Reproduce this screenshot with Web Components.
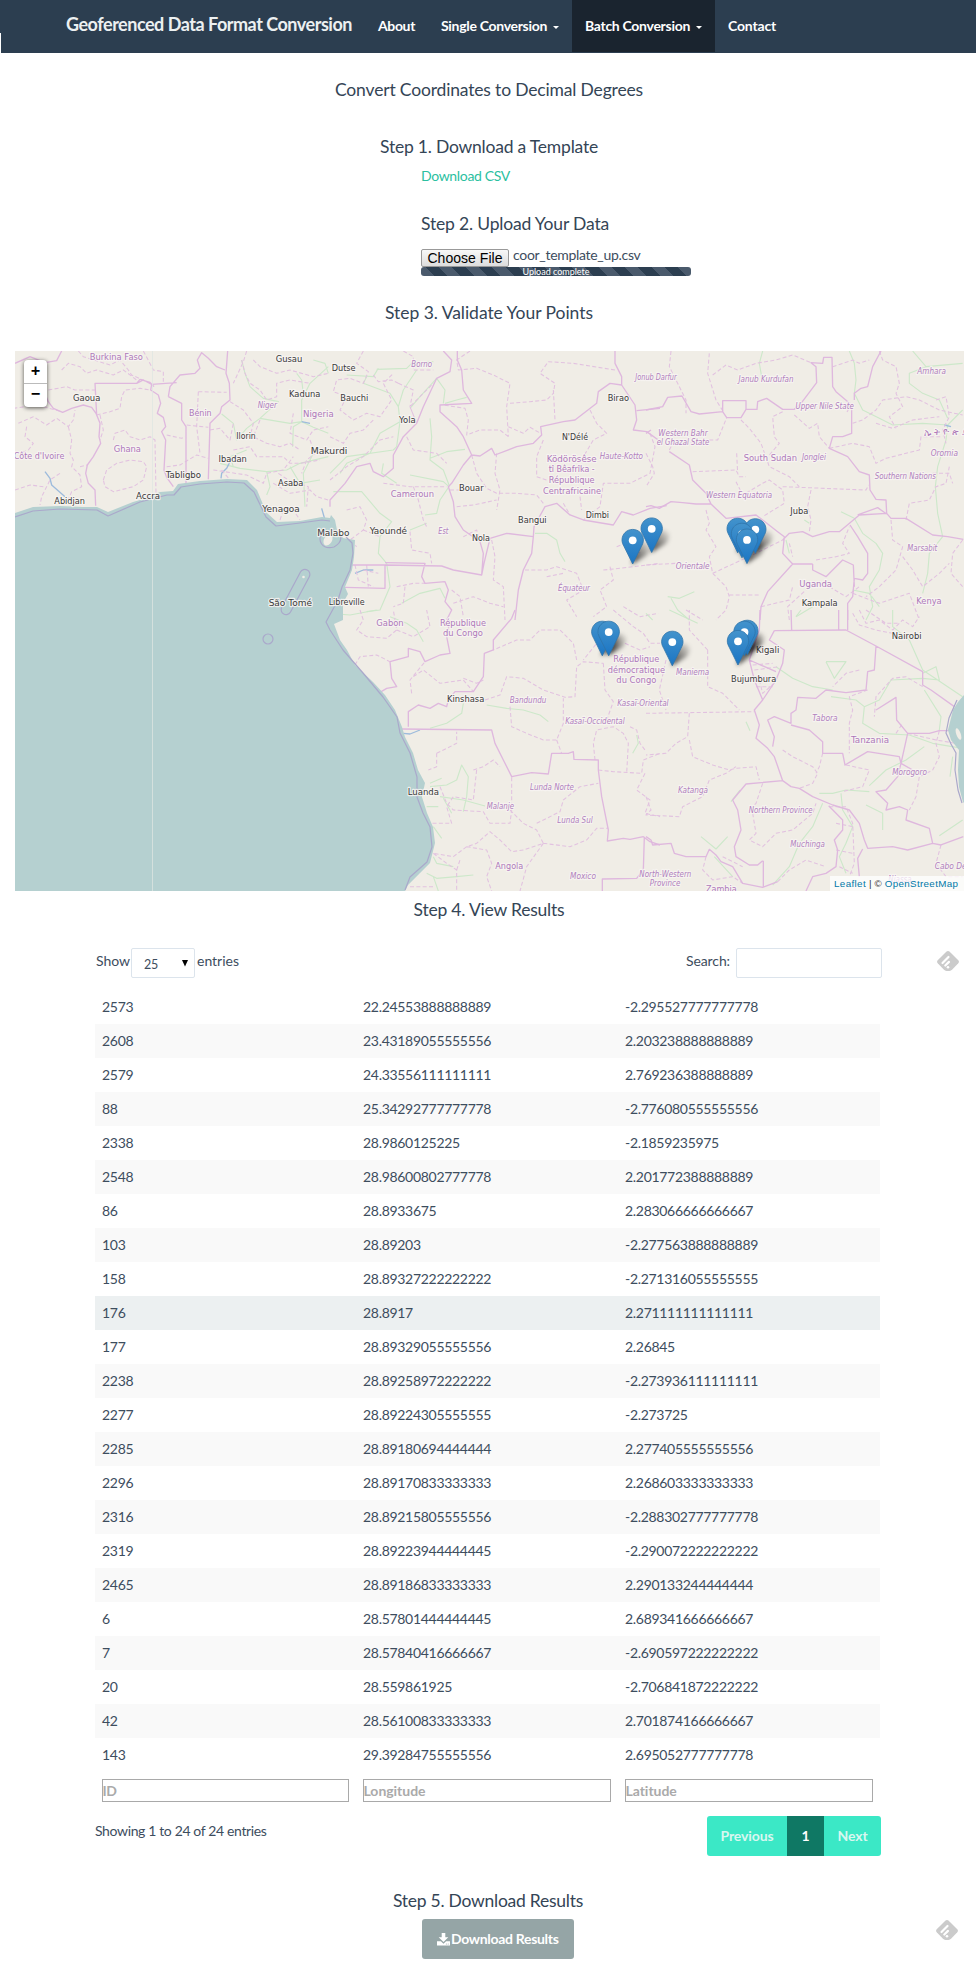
<!DOCTYPE html>
<html lang="en">
<head>
<meta charset="utf-8">
<title>Geoferenced Data Format Conversion</title>
<style>
html,body{margin:0;background:#fff}
body{font-family:Lato,"Liberation Sans",sans-serif;font-size:14px;line-height:20px;color:#3d4d5e;width:976px;height:1970px;overflow:hidden}
</style>
</head>
<body>
<conversion-page></conversion-page>
<script>
const make=(name,html,after)=>customElements.define(name,class extends HTMLElement{
  connectedCallback(){
    if(this.shadowRoot)return;
    const r=this.attachShadow({mode:'open'});
    const t=document.createElement('template');
    t.innerHTML=typeof html==='function'?html(this):html;
    r.append(document.importNode(t.content,true));
    if(after)after(this,r);
  }
});

/* Text tracked in or out to a fixed measure */
make('fit-text','<style>:host{display:inline-block;white-space:nowrap}</style><slot></slot>',el=>{
  const w=+el.getAttribute('w'),n=el.textContent.length;
  const ls=(w-el.getBoundingClientRect().width)/n;
  el.style.letterSpacing=ls.toFixed(3)+'px';
});

make('nav-item',el=>`<style>
:host{display:flex;box-sizing:border-box;height:52px;padding-left:13px;align-items:center;gap:6px;color:#fff;font-weight:700;font-size:14px}
:host([active]){background:#1a242f}
:host([caret])::after{content:"";border:3px solid transparent;border-top-color:#fff;border-bottom:0;margin-top:3px}
div{padding-bottom:1px}
</style><div><slot></slot></div>`);

make('site-nav',`<style>
:host{display:flex;height:53px;background:#2c3e50;padding-left:66px;position:relative}
:host::before{content:"";position:absolute;left:0;top:33px;width:1px;height:20px;background:#fff}
.brand{width:299px;font-size:18px;font-weight:700;color:#ecf0f1;line-height:49px}
</style>
<div class="brand"><fit-text w="286">Geoferenced Data Format Conversion</fit-text></div>
<nav-item style="width:63px"><fit-text w="37">About</fit-text></nav-item>
<nav-item caret style="width:144px"><fit-text w="106">Single Conversion</fit-text></nav-item>
<nav-item active caret style="width:143px"><fit-text w="105">Batch Conversion</fit-text></nav-item>
<nav-item style="width:80px"><fit-text w="48">Contact</fit-text></nav-item>`);

make('step-title','<style>:host{display:block;height:20px;line-height:22px;font-size:17.5px;text-align:center;color:#344556}</style><slot></slot>');

make('upload-box',`<style>
:host{display:block;margin-left:421px;width:270px}
.f{display:flex;height:18px;gap:4px}
button{box-sizing:border-box;width:88px;height:18px;padding:0;border:1px solid #999;border-radius:2px;background:linear-gradient(#f8f8f8,#ddd);font:14px/16px "Liberation Sans",sans-serif;color:#000}
.n{line-height:12px;padding-top:0}
.p{height:9px;border-radius:3px;text-align:center;color:#fff;font-size:9px;line-height:10px;background:#2c3e50 repeating-linear-gradient(45deg,#4a5a6c 0 9.4px,#2c3e50 9.4px 18.800px);overflow:hidden}
</style><div class="f"><button><fit-text w="75">Choose File</fit-text></button><div class="n"><fit-text w="127.5">coor_template_up.csv</fit-text></div></div>
<div class="p"><fit-text w="67">Upload complete</fit-text></div>`);

/* Map artwork: each sheet is drawn at three units per pixel */
const sheets=[
{x:0,y:340,
solid:'M45 70L90 50L135 68L170 62L185 33M130 150L145 185L160 205L188 217L215 205L250 195L275 202L288 220L300 250L297 290L302 310L280 350L262 375L257 400L265 430L285 450L287 497M290 225L285 130L410 130L430 120L455 133L530 128M455 133L452 150L475 165L482 190L472 220L490 232L497 260L485 275L497 300L492 390L500 412L520 440M505 170L510 140L540 105L585 100L600 85L592 60L605 38L625 55L650 80L675 90M505 170L545 190L545 240L558 260L558 430M625 418L630 250L660 220L665 200L690 180L688 130L678 100L683 33M410 130L420 118L450 127L462 140',
dash:'M185 90L205 70L240 80L260 100L290 90L340 105L370 90L410 120M290 225L330 215L360 205L365 170L375 150L420 145L450 150M235 33L250 50L330 75L360 60L385 90L395 105L440 125M430 33L455 80L460 90L490 95L490 125M145 150L200 140L225 150L285 150M55 250L100 230L140 255L170 235L205 260L220 240L225 210M205 260L215 300L210 340L220 360L215 380L240 405L245 440L215 455L200 490M80 260L75 290L100 310L85 330L60 340M310 420L320 390L350 370L390 360L430 365L440 380L430 420L400 440L340 455L315 440L310 420M340 300L345 280L375 270L390 290L420 300L450 290L465 300L468 460M180 400L150 420L125 470L120 495M45 450L90 435L130 440M500 285L545 295L555 290M560 255L625 262M500 380L540 375L590 345L625 355M595 155L680 157M595 155L590 260L600 340M725 60L735 100L750 130L780 150L800 180L830 170L830 130L870 120L930 130M630 270L660 265L690 300L700 250M690 185L730 210L760 250L750 290L720 290M780 240L760 290L800 310L840 320L870 310L900 330M700 330L750 320L770 350L850 350L870 370L900 370L960 360M640 390L740 405L790 430L800 400L850 390L880 350M880 220L870 280L920 300L940 270L985 260M760 60L780 80L830 100L870 90L940 110L985 100M740 33L730 65L700 130M820 430L870 460L930 450L950 470L985 480M840 540L850 510L880 510L900 540M930 300L945 340L920 360L905 400M835 400L865 420L925 440L920 500M665 390L690 420M300 225L310 270L300 300M240 380L262 375M40 205L75 200L100 190L130 200L185 215',
green:'M750 140L790 175L835 185L780 235L740 265L710 300L700 250L665 222M780 235L870 250L905 245L940 262L985 280M890 100L905 120L910 160M985 80L930 130L905 180L905 245L880 260L878 320M700 380L690 350L740 330M660 370L720 385L800 395L860 390L900 370L985 350M800 395L810 440L800 465M940 340L910 400L915 500M870 380L900 430L960 420M725 60L735 100L750 140M940 60L975 70L985 100',
blue:'M135 395L150 415L155 435L195 470M690 365L680 385L665 400L663 415M965 505L975 540M905 245L930 250',
labels:[['Burkina Faso',349,60,160,'s'],['Gaoua',260,183,82,'c'],['Bénin',601,228,68,'s'],['Niger',802,205,58,'p'],['Nigeria',955,231,92,'s'],['Gusau',867,67,80,'c'],['Kaduna',914,170,94,'c'],['Ilorin',738,296,58,'c'],['Ibadan',698,365,85,'c'],['Makurdi',987,343,110,'c'],['Ghana',382,336,82,'s'],["Côte d'Ivoire",117,356,152,'s'],['Tabligbo',550,414,106,'c'],['Abidjan',209,492,92,'c'],['Accra',444,477,72,'c'],['Asaba',872,438,76,'c'],['Yenagoa',843,516,112,'c'],['Malabo',1000,589,97,'c'],['São Tomé',871,798,130,'c'],['Libreville',1040,795,108,'c']]},
{x:330,y:340,
solid:'M0 500L0 480L45 430L80 380L120 370L130 395L160 410L190 385L190 345L220 290L260 250L280 200L320 115L360 95L365 60L340 33M382 33L382 60L395 90L400 150L425 190L330 195L330 215L380 260L400 290L425 345L400 375L365 430L355 440L370 485L375 530L400 570L450 605L460 640L455 705L370 690L335 678L165 675M60 675L165 675L165 745L45 742M165 668L285 670L275 710L285 730L345 725L355 750L345 785L365 810L350 840M425 345L450 348L485 325L495 345L560 320L610 310L635 285L632 260L700 245L735 240L800 190L805 155L840 130L875 135L915 195L920 240L910 270L950 275L985 300M920 212L990 205M855 33L855 70L875 110L875 135M455 705L462 670L480 595L530 580L610 590L612 560L645 500L680 490L720 525L760 540L850 555L875 515L910 525L960 505L1010 497M610 590L605 640L580 690L565 750L555 840',
dash:'M100 33L80 70L115 95L100 130L60 115L20 120L10 155L50 170L30 210L70 240L110 220L150 230L185 180L160 130L190 100M205 130L250 150L240 200L260 250M130 105L145 125L185 120L205 130M220 33L250 50L250 90L310 90M260 250L240 200L280 160L310 130M0 290L40 310L60 280L100 270L130 240M0 420L50 380L100 350L150 300L190 290M420 33L380 60L385 90L440 85L490 105L540 130L530 200L535 290M540 190L600 185L650 180L670 160L675 130L630 100L655 65L730 70L855 90M535 290L510 270L450 270L410 285L415 240L405 205L340 195M535 260L580 280L600 262L632 280M500 340L495 400L510 450L500 510M425 345L440 400L470 445L500 460L560 460L620 465L640 490M380 500L430 495L500 480M640 300L620 350L620 410L650 420M780 210L800 250L830 280L790 300L760 350M960 280L975 320L960 400L900 430L820 430L810 500L760 540M670 150L675 240M160 430L240 440L350 440M250 440L265 480L280 540L290 560M50 510L90 500L110 540L100 570L60 600L80 620M100 570L150 590M75 675L85 720L130 740M100 690L145 700M110 675L115 740M240 575L245 630L300 640L305 670M400 590L440 570L450 605M485 600L495 650L490 720L520 740L525 840M585 690L650 690L680 680L740 700L760 750L710 780L740 830M650 710L700 700M820 690L870 685L990 670M840 680L850 720L810 750L830 800L790 830M880 800L930 830L985 820M860 620L910 600L930 640M365 750L390 770L400 830M200 740L250 730L285 730M225 740L220 790L190 800M370 790L430 770L480 790L520 800M230 290L250 330L320 340L350 370M750 470L755 510M700 490L720 525M410 450L360 450',
green:'M10 455L95 455L150 520L185 545L150 590L145 640L170 670M240 405L340 425L357 440L330 480L320 520L285 525M300 235L305 290L300 360L340 390L357 435M300 355L350 335L405 328M140 88L230 85L245 70L310 65M50 105L130 110L145 85M110 110L100 130L180 160L205 200L210 245L150 280L120 340L50 370L30 400M210 245L200 320L190 330L50 350L0 400M240 205L270 170L320 115L345 150L340 190M345 190L380 180L410 172M615 580L650 580L680 600L690 640L705 665M170 670L180 740L150 810L110 815M215 790L270 760L330 745L345 775M260 90L220 150L205 200M240 570L290 550M160 370L155 400L200 430',
blue:'M75 700L100 690L130 690',
labels:[['Dutse',41,93,72,'c'],['Borno',275,82,62,'p'],['Bauchi',73,183,84,'c'],['Yola',232,249,50,'c'],['Birao',865,184,64,'c'],["N'Délé",735,301,78,'c'],['Ködörösêse',725,365,150,'s'],['tî Bêafrîka -',725,397,138,'s'],['République',725,430,138,'s'],['Centrafricaine',726,462,174,'s'],['Haute-Kotto',874,357,130,'p'],['Bouar',424,454,74,'c'],['Cameroun',247,470,130,'s'],['Bangui',607,549,86,'c'],['Dimbi',802,535,70,'c'],['Yaoundé',175,581,112,'c'],['Est',340,583,30,'p'],['Nola',453,603,54,'c'],['Équateur',732,754,96,'p']]},
{x:646,y:340,
solid:'M0 210L50 200L65 172L108 168L135 215L160 222L230 215L242 233L285 233L300 208L333 208L335 185L362 175L410 208L445 208L465 190L512 128L510 80L495 68L530 70L533 52L558 52L560 140L570 155L617 195L617 280L590 290L560 290L550 325L605 350L640 395L670 405L672 450L690 478L720 480L722 520L640 525L580 575L550 575L500 590L470 575L430 580L410 600M230 215L230 182L300 182L300 208M0 500L15 497L40 505L75 485L110 488L150 492L195 492L240 535L330 525L350 540L395 575L415 590L410 640L440 672L500 672M440 672L365 755L345 800L342 840M705 33L680 80L665 140L645 145L625 160L625 180M722 520L735 535L780 535L860 585L905 590L952 598M722 522L695 503L635 525M612 555L635 590L665 640L665 700L650 720L625 715L620 770L605 790L605 840M500 690L540 710L590 660L622 675L625 740M500 672L500 690L540 710M0 280L15 270M70 335L130 375L140 420L180 460L195 492',
dash:'M75 33L70 80L95 130L120 180L120 220M190 40L185 100L210 180L232 215M200 105L240 75L275 90L330 70L390 60L440 45L495 68M70 330L80 310L130 310L180 300L215 300L242 233M285 240L310 265L345 310L370 380L430 410L460 440M140 395L270 390L280 410L300 410M272 340L275 400M410 215L380 230L385 290L400 310L370 345M445 225L490 265L515 250L520 290L550 325M270 425L290 465L350 430L370 420L410 450L415 490L350 530M410 440L660 450L668 435M495 450L485 500L495 540L490 575M560 80L620 60L640 70L670 60M620 190L600 220M620 250L650 240L690 210L710 180L780 170L820 180L880 210L950 225M690 250L740 265L800 240L880 230M700 33L710 60L750 80L760 130L750 160L770 200L730 230L750 265M550 325L620 310L670 320L690 370L720 355L820 330L825 290L890 290M780 540L790 490L850 480L870 440L900 430L910 380M735 540L740 600L770 620L750 690L700 740L660 770M950 600L920 640L915 700L950 740M770 650L800 690L830 740L880 700L910 670M510 660L570 650L610 640L590 610L610 560M430 610L440 650M0 340L20 380L25 400L0 440M180 510L190 550L180 570L210 620L190 650L200 700L240 740L250 770L240 810L210 840M0 675L90 670M200 700L330 640L410 600M250 765L340 765M120 810L170 840M345 800L430 780L440 740M550 740L600 770L640 740M620 760L700 790L790 760L820 840M430 840L425 800L480 750M870 180L900 170L910 230L890 270L900 310M860 400L910 400L920 430',
green:'M350 33L340 70L347 110M610 33L625 70L630 120L625 160L650 210L700 235L740 255L830 250L905 255L950 210M800 33L840 80L950 70M840 80L790 100L790 130L830 160L880 180L905 235M905 255L900 300L875 380L868 440L875 520L890 590L850 640L845 700L830 760M585 515L625 535L650 580L690 610L710 640L700 690L670 740L680 800L660 840M65 770L100 775L145 755M75 775L95 810L130 840M475 540L490 550M420 600L430 640M620 750L670 760L700 800M450 830L500 800',
blue:'M895 255L915 260',
labels:[['Jonub Darfur',30,119,124,'p'],['Janub Kurdufan',360,126,165,'p'],['Upper Nile State',536,206,175,'p'],['Amhara',857,101,86,'p'],['Western Bahr',111,289,148,'p'],['el Ghazal State',111,316,158,'p'],['South Sudan',373,364,160,'s'],['Jonglei',504,361,72,'p'],['ኢ ት ዮ ጵ ያ',899,285,128,'s'],['Oromia',895,349,82,'p'],['Southern Nations',778,418,184,'p'],['Western Equatoria',279,474,198,'p'],['Juba',460,522,54,'c'],['Marsabit',829,634,90,'p'],['Orientale',140,686,102,'p'],['Uganda',509,740,98,'s'],['Kampala',521,799,108,'c'],['Kenya',849,791,76,'s']]},
{x:330,y:610,
solid:'M555 0L545 25L490 90L490 120L463 130L460 200L430 245L375 245L355 270L350 290L325 280L300 295L265 285L235 305L235 350M180 155L235 140L235 115L270 125L285 155L330 135L360 130L350 80L360 30M180 155L185 205L200 230L170 235L145 250M215 357L485 360L495 400L520 450L545 500L605 488L655 492L665 430L715 430L730 425L732 448L805 450L805 480L815 560L835 660L832 693L880 685L900 688L940 680L960 695L990 705M943 680L940 780L920 805L817 807L817 843',
dash:'M90 0L100 30L80 60L110 80L170 85L200 60L190 0M200 60L250 80L300 50L290 0M75 165L90 140L140 135L180 155M250 200L280 180L330 220L400 210L430 245M245 250L240 210L285 155M400 205L440 220L460 210M465 270L510 255L530 200L580 205L640 240L705 262L735 260L740 170L760 155L820 160M540 290L545 350L590 370L640 390L680 390L700 340L700 265M680 390L695 430M795 450L790 400L800 360L850 350L880 370L895 400L890 490M805 480L850 485L935 490L940 450L990 430M820 160L825 240L850 275L830 330M740 150L730 100L690 60L630 60L600 90L560 90L490 120M885 100L930 120L960 110M850 0L910 50L940 70L960 100L990 100M320 430L380 400L380 365M320 430L320 470L295 480M430 480L460 470L490 450L510 470M440 480L430 570L370 560L350 590L365 640L300 640M330 530L350 580L370 600L460 605L480 640L540 640L545 600L545 500M540 600L580 640L620 660L640 700L580 720L545 725L510 690L480 665L440 700L410 710L370 740L310 730M620 640L690 605L700 570L750 530L805 520M640 700L720 710L770 690L800 655L835 655M640 700L590 770L570 843M410 710L470 720L485 760L470 800L485 843M380 780L390 750M310 730L350 760L380 780L380 843M240 830L310 830M945 490L920 540L960 570L945 610L990 620M860 60L800 100L760 150M900 350L920 360L930 400L945 420',
green:'M0 10L60 15L140 0M180 20L230 40L260 60L280 95M470 285L530 295L580 300L630 315L655 335M300 355L350 340L395 310L400 280M300 530L350 525L380 510L395 465L415 500L410 560L400 605M330 560L400 570L465 588M300 520L335 505M290 590L325 590M340 565L365 610M310 740L320 760L370 770M290 790L320 805L380 800L430 795M310 800L325 843M920 375L925 400L908 430M310 650L335 685',
blue:'M220 370L240 372L270 360',
labels:[['Gabon',180,49,82,'s'],['République',399,47,138,'s'],['du Congo',399,79,120,'s'],['Kinshasa',407,276,112,'c'],['Bandundu',594,279,110,'p'],['République',919,156,138,'s'],['démocratique',919,188,172,'s'],['du Congo',919,220,120,'s'],['Kasaï-Oriental',939,287,154,'p'],['Kasaï-Occidental',795,343,178,'p'],['Luanda',280,555,94,'c'],['Lunda Norte',666,540,132,'p'],['Malanje',511,596,82,'p'],['Lunda Sul',735,638,106,'p'],['Angola',538,777,84,'s'],['Moxico',759,806,78,'p']]},
{x:646,y:610,
solid:'M0 680L15 690L20 705L75 700L85 730L120 740L180 740L190 718L210 735L225 755L260 770L290 820L350 832L395 815M352 832L352 752M342 0L340 60L310 150L325 210L350 270L325 300L340 345L330 385L365 415L385 440L410 512L435 530L460 535L500 560L560 585L610 600L640 640L655 690L665 715L740 710L785 720L860 700L885 705L952 680M410 512L300 522L260 570L275 600L285 660L265 710L270 740L310 765L335 765L350 752M385 62L600 60L690 108L830 185L830 225L855 240L925 290M690 108L685 180L665 185L660 240L600 248L540 240L510 265L455 262L450 300L435 310L435 340L385 320L365 330L385 380L380 410M435 345L490 360L530 395L530 430L590 430L597 465L665 425L760 440L765 460L785 370L850 370L880 362L925 362M690 300L750 262L752 330L785 370M605 0L605 60M578 0L578 60M385 62L370 90L415 120L410 160L390 210L350 270M548 587L590 630L590 660L565 690L575 720L570 770L540 790L500 800L480 843M650 717L635 745L640 800M765 460L800 480M765 460L755 500L720 540L690 545L725 580L720 600L760 590L785 600L780 630L850 655L860 700M310 150L390 185M320 200L385 200M435 0L437 62',
dash:'M0 310L325 305M130 310L125 380L90 400L60 430L0 435M130 390L140 440L200 465L250 480L270 475L330 470L340 510M350 520L330 580L310 600M185 120L185 230L230 250L280 300M185 120L130 60L130 0M60 150L40 240L60 300M0 560L15 600L0 615L100 620L110 590L170 560L190 510L240 490L270 470M320 610L330 670L310 690L350 710L390 670L440 660L500 610L510 580M410 420L440 440L500 470L515 490L500 520L460 535M530 430L520 470L510 490M600 465L670 480L650 530L590 545M665 240L610 260L620 300L610 340L610 430M750 370L770 340M830 230L780 200L740 205L690 260L685 320M880 362L870 400L880 440L860 480L820 500L810 560L790 600M785 370L870 390L930 400M320 165L380 160M325 180L400 170M340 210L350 250L390 215M330 230L380 230M180 740L170 780L200 810L260 800L290 820M230 740L290 770M550 590L600 590L620 640L625 760L610 800M570 640L620 650M570 720L620 730M580 770L620 790M395 815L430 780L480 750L540 770M885 705L870 760L900 800L950 800M640 0L660 40L700 30L740 60L770 30L800 50L820 20M620 10L640 45L690 60L740 70M660 0L720 40L760 40M640 180L600 190L560 230',
green:'M70 0L155 40M20 30L0 10M300 335L312 362M465 0L450 20M390 170L440 205L500 230L560 240M540 155L600 155L565 205L540 155M555 260L630 270L655 290L650 340L700 370L790 375L860 400L950 415M655 290L700 270L735 210L830 205L880 210L870 170L830 190M740 0L740 50L790 90L830 180L950 260M835 240L885 320L880 360M670 527L720 480L780 450L835 410M520 550L560 550L600 540L670 545M530 580L500 650L460 700L430 770L380 825M585 550L590 600L620 650L600 700L580 740L600 790M660 585L710 610L710 660M165 680L210 717L245 680M205 740L260 800M255 575L282 540M920 440L912 500M880 677L950 630',
blue:'',
labels:[['Nairobi',782,88,90,'c'],['Kigali',365,129,70,'c'],['Maniema',140,196,100,'p'],['Bujumbura',323,216,136,'c'],['Tabora',537,332,76,'p'],['Tanzania',672,399,114,'s'],['Morogoro',791,496,104,'p'],['Katanga',141,549,90,'p'],['Northern Province',404,609,192,'p'],['Muchinga',485,710,104,'p'],['North-Western',58,802,156,'p'],['Province',57,829,92,'p'],['Zambia',226,846,92,'s'],['Cabo Delgado',945,778,158,'p'],['Niassa',762,817,70,'p']]}
];
/* tip position of each pin, in page pixels */
const pins=[[651.7,552.7],[632.7,564.2],[737.7,553],[755.3,553.5],[742,558],[747,563.8],[602.3,656],[608.7,656],[672.3,666],[747.3,655],[744.5,656],[738,665.2]];
const sheetSvg=s=>`<g transform="translate(${s.x} ${s.y}) scale(.33333)"><path class="g" d="${s.green||'M0 0'}"/><path class="b" d="${s.blue||'M0 0'}"/><path class="d" d="${s.dash||'M0 0'}"/><path class="s" d="${s.solid||'M0 0'}"/></g>`;
const labelSvg=s=>`<g transform="translate(${s.x} ${s.y}) scale(.33333)">${s.labels.map(([t,x,y,w,k])=>`<text class="${k}t" x="${x-w/2}" y="${y}" textLength="${w}" lengthAdjust="spacingAndGlyphs">${t}</text>`).join('')}</g>`;

make('point-map',()=>`<style>
:host{display:block;position:relative;width:949px;height:540px;margin-left:15px;overflow:hidden}
svg{display:block}
path{fill:none;stroke-linejoin:round}
.s{stroke:#dfb8de;stroke-width:4}
.d{stroke:#e2c2e0;stroke-width:3.2;stroke-dasharray:12 7}
.g{stroke:#cde8ca;stroke-width:3.4}
.b{stroke:#9dbbdc;stroke-width:4}
.sea{fill:#b5d0d0}
.m{stroke:#aaa8cb;stroke-width:1.2}
text{font-family:"DejaVu Sans",sans-serif;paint-order:stroke;stroke:#f8f5f3;stroke-opacity:.85;stroke-width:7px;stroke-linejoin:round}
.ct{font-size:26.5px;fill:#3a3a3a}
.st{font-size:27px;fill:#ae79ba}
.pt{font-size:25.500px;font-style:oblique;fill:#b080bd}
.zoom{position:absolute;left:9px;top:9px;width:23px;height:47px;border-radius:4px;background:#fff;box-shadow:0 1px 4px rgba(0,0,0,.65);display:flex;flex-direction:column;font:bold 16px/25px "Liberation Mono",monospace;color:#000;text-align:center}
.zoom span{height:23px}.zoom span+span{border-top:1px solid #bbb;line-height:22px}
.att{position:absolute;right:0;bottom:0;width:130px;height:15px;padding-left:4px;background:rgba(255,255,255,.75);font:9.8px/15px "Liberation Sans",sans-serif;color:#333;white-space:nowrap;display:flex;gap:3px}
a{color:#0078a8}
</style>
<svg width="949" height="540" viewBox="15 351 949 540">
<defs><linearGradient id="pg" x1="0" y1="0" x2="0" y2="1"><stop offset="0" stop-color="#4393cc"/><stop offset="1" stop-color="#1b75c4"/></linearGradient>
<filter id="bl" x="-50%" y="-50%" width="200%" height="200%"><feGaussianBlur stdDeviation="2"/></filter>
<linearGradient id="sh" x1="0" y1="1" x2="1" y2="0"><stop offset="0" stop-opacity=".8"/><stop offset=".9" stop-opacity=".1"/></linearGradient></defs>
<rect x="15" y="351" width="949" height="540" fill="#f0ede6"/>
${sheets.map(sheetSvg).join('')}
<path class="sea" d="M15 513L33 507L60 506L83 507L97 507L108 512L133 502L147 498L160 492L173 491L178 484L200 481L227 479L247 480L257 490L262 502L267 513L277 522L300 521L322 517L330 518L331 515L335 520L337 530L343 538L355 540L354 557L352 570L345 587L348 594L343 603L343 620L334 624L340 640L347 650L355 665L373 682L385 695L395 710L402 727L405 737L413 753L418 770L425 783L422 797L427 813L433 827L435 843L430 863L420 873L408 885L405 891L15 891Z"/>
<path class="sea" d="M964 695L958 702L953 710L948 730L951 740L959 750L958 770L959 787L963 802L964 803Z"/>
<ellipse cx="958.5" cy="734" rx="2.2" ry="6" fill="#f0ede6" transform="rotate(-20 958.5 734)"/>
<ellipse cx="328" cy="540" rx="4" ry="6" fill="#f0ede6" transform="rotate(30 328 540)"/><circle cx="303.5" cy="577" r="1.3" fill="#f0ede6"/>
<path class="m" d="M15 517L33 511L60 509L97 510L108 516L140 502L167 495L174 495L181 487L200 484L227 482L244 483L254 492L266 517L276 526L300 523L322 520L330 521M346 537L352 543L353 553L350 570L342 587L338 600L326 622L330 630L343 650L363 673L383 697L397 717L400 733L410 753L417 777L417 797L423 813L430 827L432 847L427 862L410 877L405 890M322 532C317 541 322 550 334 547C346 540 340 530 331 530M957 700L949 718L946 733L951 744L956 753L955 770L958 790L962 803"/>
<rect class="m" fill="none" x="290.500" y="567" width="10" height="50" rx="5" transform="rotate(28 295.5 592)"/>
<circle class="m" fill="none" cx="268" cy="639" r="5"/>
<rect x="152" y="351" width="1" height="540" fill="#dfe6e2" opacity=".75"/>
${sheets.map(labelSvg).join('')}
${pins.map(([x,y])=>`<path filter="url(#bl)" style="fill:url(#sh)" d="M${x-1} ${y}L${x+2} ${y-15}Q${x+6} ${y-24} ${x+14} ${y-22}Q${x+21} ${y-18} ${x+14} ${y-9}Z"/>`).join('')}
${pins.map(([x,y])=>`<g transform="translate(${x-11.2} ${y-35.2})"><path style="fill:url(#pg);stroke:#2f74aa;stroke-width:.8" d="M11.2.4C5.2.4.5 5.1.5 11c0 2.6.9 4.3 2.2 6.8L11.2 35l8.5-17.2C21 15.300 21.900 13.600 21.900 11 21.900 5.100 17.200.4 11.200.4Z"/><circle cx="11.200" cy="11.300" r="3.900" fill="#fff"/></g>`).join('')}
</svg>
<div class="zoom"><span>+</span><span>−</span></div>
<div class="att"><a><fit-text w="32">Leaflet</fit-text></a><span>|</span><span>©</span><a><fit-text w="73.5">OpenStreetMap</fit-text></a></div>`);

const rows=`2573 22.24553888888889 -2.295527777777778
2608 23.43189055555556 2.203238888888889
2579 24.33556111111111 2.769236388888889
88 25.34292777777778 -2.776080555555556
2338 28.9860125225 -2.1859235975
2548 28.98600802777778 2.201772388888889
86 28.8933675 2.283066666666667
103 28.89203 -2.277563888888889
158 28.89327222222222 -2.271316055555555
176 28.8917 2.271111111111111
177 28.89329055555556 2.26845
2238 28.89258972222222 -2.273936111111111
2277 28.89224305555555 -2.273725
2285 28.89180694444444 2.277405555555556
2296 28.89170833333333 2.268603333333333
2316 28.89215805555556 -2.288302777777778
2319 28.89223944444445 -2.290072222222222
2465 28.89186833333333 2.290133244444444
6 28.57801444444445 2.689341666666667
7 28.57840416666667 -2.690597222222222
20 28.559861925 -2.706841872222222
42 28.56100833333333 2.701874166666667
143 29.39284755555556 2.695052777777778`.split('\n').map(r=>r.split(' '));

make('data-row','<style>:host{display:grid;grid-template-columns:261px 262px 1fr;height:34px;line-height:34px;padding-left:7px;font-size:14px;letter-spacing:-.3px}:host(:nth-of-type(even)){background:#f9f9f9}:host([hover]){background:#ecf0f1}</style><slot></slot>');

make('results-table',()=>`<style>
:host{display:block;margin-left:95px;width:785px}
.top{display:flex;height:30px;margin-bottom:12px;line-height:26px}
.sel,.inp{box-sizing:border-box;height:30px;border:1px solid #dce4ec;border-radius:2px}
.sel{width:64px;margin:0 2px 0 1px;padding:3px 6px 0 12px;display:flex;justify-content:space-between;font-size:12.5px}
.sel svg{margin-top:8px}
.inp{width:146px;margin:0 -2px 0 6px}
.filters{display:grid;grid-template-columns:247px 248px 248px;column-gap:14px;margin:7px 0 14px 7px}
.filters div{box-sizing:border-box;height:23px;border:1px solid #a9a9a9;color:#aaa;font-weight:700;line-height:22px}
.filters fit-text{margin-left:-.5px}
.foot{display:flex;justify-content:space-between;height:40px;margin-right:-1px}
.pages{display:flex;border-radius:3px;overflow:hidden;background:#3be8c6;color:#d8f7f0;font-weight:700;line-height:40px;text-align:center}
.pages div:nth-child(1){width:80px}.pages div:nth-child(2){width:37px;background:#0f7864;color:#fff}.pages div:nth-child(3){width:57px}
</style>
<div class="top"><span style="padding-left:1px"><fit-text w="34">Show</fit-text></span><div class="sel"><fit-text w="14">25</fit-text><svg width="6" height="7"><path d="M0 0H6L3 6.500Z" fill="#000"/></svg></div><fit-text w="42">entries</fit-text>
<span style="margin-left:auto"><fit-text w="44">Search:</fit-text></span><div class="inp"></div></div>
${rows.map(r=>`<data-row${r[0]==='176'?' hover':''}>${r.map(c=>`<span>${c}</span>`).join('')}</data-row>`).join('')}
<div class="filters"><div><fit-text w="14">ID</fit-text></div><div><fit-text w="62">Longitude</fit-text></div><div><fit-text w="51.500">Latitude</fit-text></div></div>
<div class="foot"><div style="padding-top:5px"><fit-text w="171.500">Showing 1 to 24 of 24 entries</fit-text></div><div class="pages"><div><fit-text w="53">Previous</fit-text></div><div>1</div><div><fit-text w="30">Next</fit-text></div></div></div>`);

make('download-button',`<style>
:host{display:flex;box-sizing:border-box;width:152px;height:40px;margin-left:422px;padding-left:15px;gap:1px;align-items:center;background:#95a5a6;border-radius:3px;color:#fff;font-weight:700}
</style><svg width="13" height="13" viewBox="0 0 13 13"><path fill="#fff" d="M4.700 0H8.300V4.300H11.300L6.500 9 1.700 4.300H4.700ZM0 8.300H3.900L6.500 10.700 9.100 8.300H13V12.500H0Z"/><circle cx="9.300" cy="10.900" r=".5" fill="#95a5a6"/><circle cx="11.200" cy="10.900" r=".5" fill="#95a5a6"/></svg><fit-text w="107.500">Download Results</fit-text>`);

make('feed-icon',`<style>:host{display:block;position:absolute;width:22px;height:20px}svg{display:block}</style>
<svg width="22" height="20" viewBox="0 0 22 20"><path fill="#cbcbcb" d="M9.300.8Q11-.7 12.700.8L21.300 9.300Q22.600 10.700 21.300 12.200L15.500 18.300Q13.900 19.900 12.500 19.900H9.500Q8.100 19.900 6.500 18.300L.7 12.200Q-.6 10.700.7 9.300Z"/><path d="M5.500 12L11.500 6M8.300 14.500L12 10.900" stroke="#fff" stroke-width="2.200" stroke-linecap="round"/><circle cx="11" cy="16.200" r="1.300" fill="#fff"/></svg>`);

make('conversion-page',`<style>
:host{display:block;position:relative;width:976px;height:1970px;background:#fff}
.c{margin-left:15px;width:948px}
.link{margin:10px 0 0 421px;height:20px;color:#2bbf9f}
</style>
<site-nav></site-nav>
<step-title class="c" style="margin-top:26px"><fit-text w="308">Convert Coordinates to Decimal Degrees</fit-text></step-title>
<step-title class="c" style="margin-top:37px"><fit-text w="218">Step 1. Download a Template</fit-text></step-title>
<div class="link"><fit-text w="89">Download CSV</fit-text></div>
<step-title style="margin:27px 0 0 421px;text-align:left"><fit-text w="188">Step 2. Upload Your Data</fit-text></step-title>
<upload-box style="margin-top:16px"></upload-box>
<step-title class="c" style="margin-top:26px"><fit-text w="208">Step 3. Validate Your Points</fit-text></step-title>
<point-map style="margin-top:29px"></point-map>
<step-title class="c" style="margin-top:8px"><fit-text w="151">Step 4. View Results</fit-text></step-title>
<results-table style="margin-top:29px"></results-table>
<step-title style="margin:34px 0 0 13px;width:950px"><fit-text w="190">Step 5. Download Results</fit-text></step-title>
<download-button style="margin-top:9px"></download-button>
<feed-icon style="left:937px;top:951px"></feed-icon>
<feed-icon style="left:936px;top:1920px"></feed-icon>`);
</script>
</body>
</html>
